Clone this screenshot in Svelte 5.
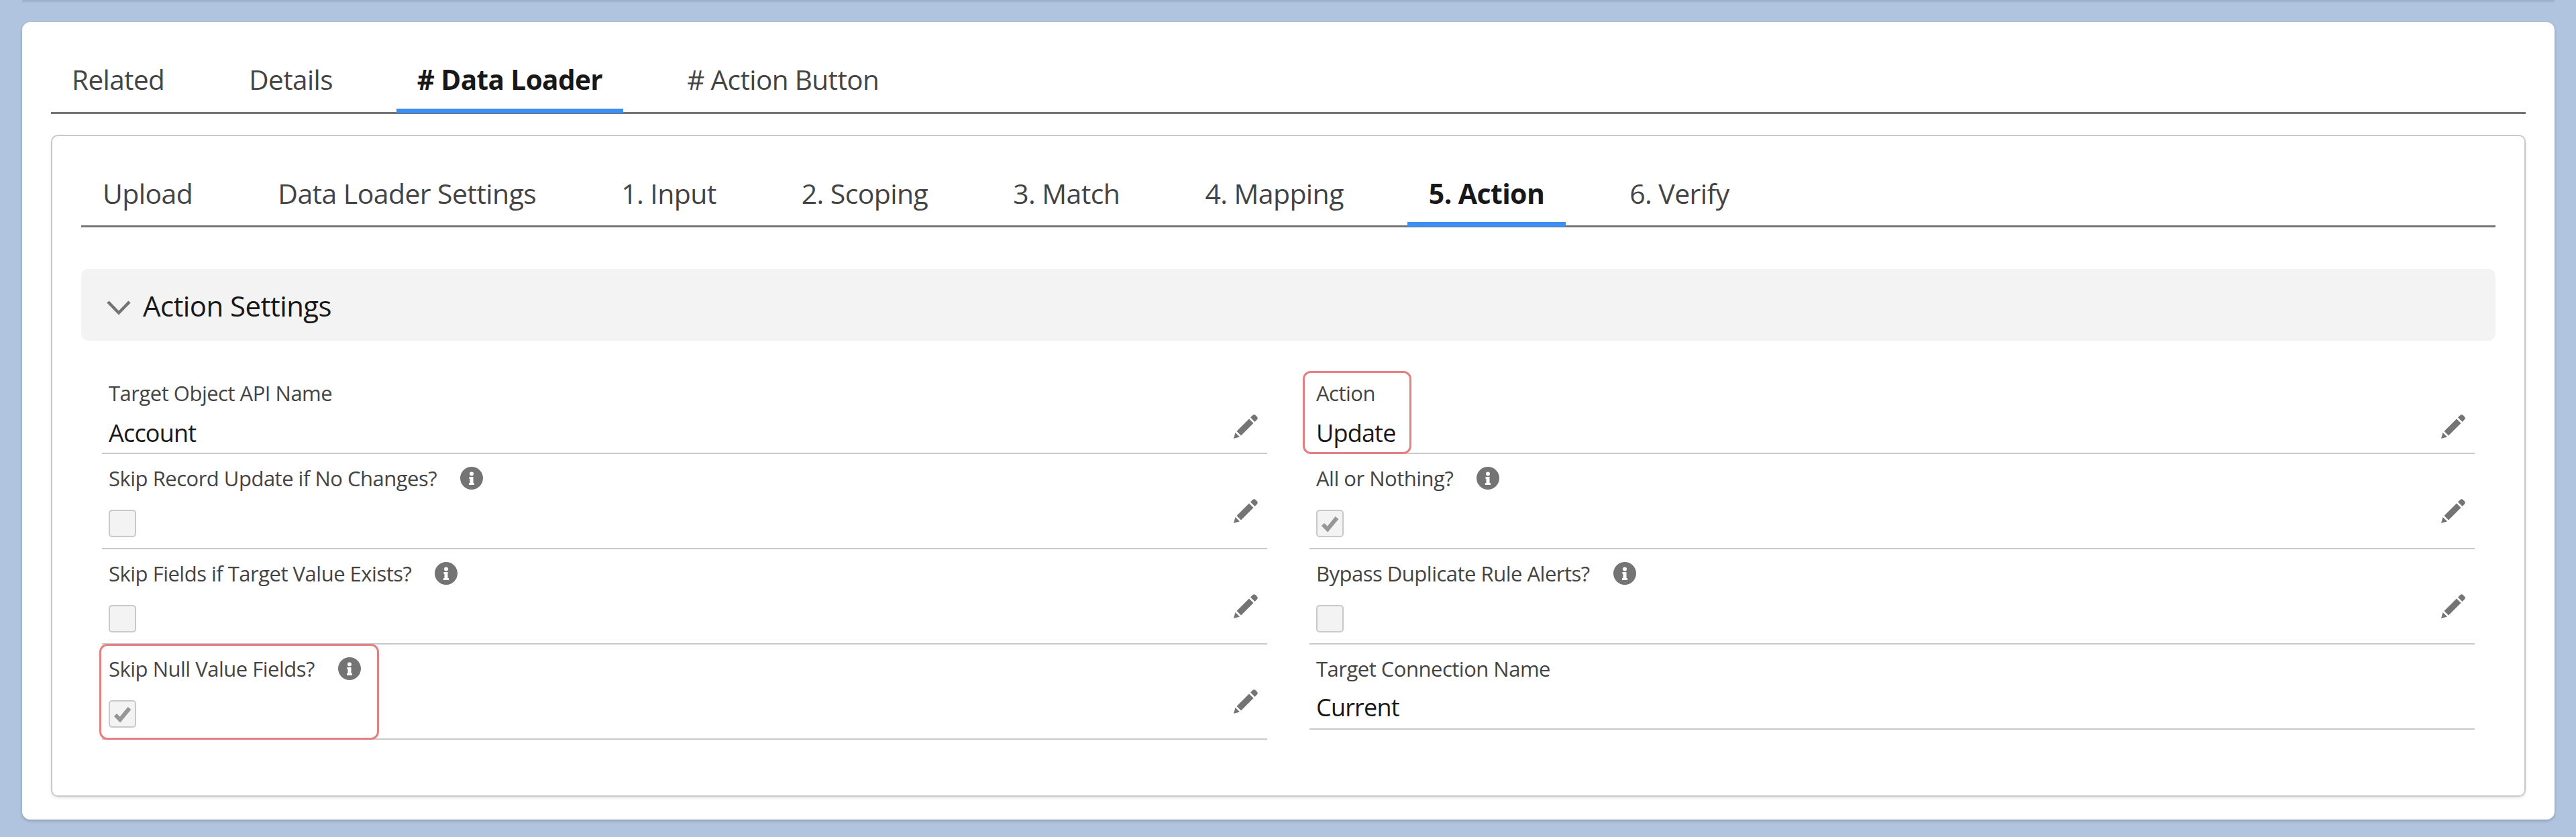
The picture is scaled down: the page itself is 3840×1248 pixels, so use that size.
<script>
  const outerTabs = ['Related', 'Details', '# Data Loader', '# Action Button'];
  const innerTabs = ['Upload', 'Data Loader Settings', '1. Input', '2. Scoping', '3. Match', '4. Mapping', '5. Action', '6. Verify'];

  const fields = [
    { label: 'Target Object API Name', value: 'Account' },
    { label: 'Action', value: 'Update', mark: 'mark-action' },
    { label: 'Skip Record Update if No Changes?', info: true, checked: false },
    { label: 'All or Nothing?', info: true, checked: true },
    { label: 'Skip Fields if Target Value Exists?', info: true, checked: false },
    { label: 'Bypass Duplicate Rule Alerts?', info: true, checked: false },
    { label: 'Skip Null Value Fields?', info: true, checked: true, mark: 'mark-null' },
    { label: 'Target Connection Name', value: 'Current', locked: true, last: true }
  ];
</script>

<div class="page">
  <div class="prev-shadow"></div>
  <div class="card">
    <ul class="tabs outer">
      {#each outerTabs as tab}
        <li class:active={tab === '# Data Loader'}>{tab}</li>
      {/each}
    </ul>

    <div class="inner">
      <ul class="tabs">
        {#each innerTabs as tab}
          <li class:active={tab === '5. Action'}>{tab}</li>
        {/each}
      </ul>

      <div class="section">
        <svg class="chevron" viewBox="0 0 36 21"><path d="M2 2 L18 18.500 L34 2" /></svg>
        <span>Action Settings</span>
      </div>

      <div class="grid">
        {#each fields as f}
          <div class="field" class:check={f.value === undefined} class:last={f.last}>
            <div class="body">
              <div class="label">
                <span>{f.label}</span>
                {#if f.info}
                  <svg class="info" viewBox="0 0 34 34">
                    <circle cx="17" cy="17" r="17" fill="#747474" />
                    <circle cx="17" cy="10.500" r="3" fill="#fff" />
                    <path d="M13.500 15 h6 v9 h1.500 v3 h-8 v-3 h1.500 v-6 h-1 z" fill="#fff" />
                  </svg>
                {/if}
              </div>
              {#if f.value !== undefined}
                <div class="value">{f.value}</div>
              {:else}
                <div class="box">
                  {#if f.checked}
                    <svg viewBox="0 0 37 37"><path d="M8 20 L15 27 L29 10" /></svg>
                  {/if}
                </div>
              {/if}
            </div>
            {#if !f.locked}
              <svg class="pencil" viewBox="0 0 37 37">
                <path d="M0 37 L2.500 28 L9 34.500 Z" />
                <path d="M4.500 26 L23 7.500 L29.500 14 L11 32.500 Z" />
                <path d="M25 5.500 L28 2.500 Q30.500 0 33 2.500 L34.500 4 Q37 6.500 34.500 9 L31.500 12 Z" />
              </svg>
            {/if}
            {#if f.mark}
              <div class="mark {f.mark}"></div>
            {/if}
          </div>
        {/each}
      </div>
    </div>
  </div>
</div>

<style>
  :global(body) {
    background: #b0c4df;
    font-family: "Open Sans", "Noto Sans", sans-serif;
  }
  .page {
    height: 1248px;
    box-sizing: border-box;
    padding: 0 32px 0 33px;
    overflow: hidden;
  }
  .prev-shadow {
    height: 5px;
    margin-bottom: 28px;
    background: linear-gradient(#9aadc8, #b0c4df);
  }
  .card {
    height: 1189px;
    box-sizing: border-box;
    padding: 0 43px;
    background: #fff;
    border-radius: 12px;
    box-shadow: 0 2px 4px rgba(0, 0, 0, 0.22);
  }
  .tabs {
    display: flex;
    gap: 63px;
    margin: 0;
    padding: 45px 0 0;
    list-style: none;
    border-bottom: 3px solid #747474;
  }
  .tabs li {
    position: relative;
    padding: 0 32px;
    height: 88px;
    line-height: 80px;
    font-size: 41px;
    letter-spacing: -0.6px;
    color: #444;
  }
  .tabs.outer {
    gap: 64px;
    padding-top: 46px;
  }
  .tabs.outer li {
    padding: 0 31px;
    font-size: 40.500px;
  }
  .tabs li.active {
    font-weight: 700;
    color: #181818;
  }
  .tabs li.active::after {
    content: "";
    position: absolute;
    left: 0;
    right: 0;
    bottom: -2px;
    height: 7px;
    background: #3b8ff2;
  }
  .inner {
    height: 987px;
    box-sizing: border-box;
    margin-top: 31px;
    padding: 0 43px;
    border: 2px solid #c9c9c9;
    border-radius: 10px;
    box-shadow: 0 2px 4px rgba(0, 0, 0, 0.1);
  }
  .section {
    display: flex;
    align-items: center;
    gap: 18px;
    height: 107px;
    margin-top: 62px;
    padding-left: 38px;
    background: #f3f3f3;
    border-radius: 10px;
    font-size: 42px;
    letter-spacing: -0.6px;
    color: #181818;
  }
  .section span {
    margin-top: 2px;
  }
  .chevron {
    width: 36px;
    height: 21px;
    margin-top: 8px;
  }
  .chevron path {
    fill: none;
    stroke: #747474;
    stroke-width: 4.500;
  }
  .grid {
    display: grid;
    grid-template-columns: 1fr 1fr;
    column-gap: 63px;
    align-items: start;
    margin-top: 45px;
    padding: 0 31px;
  }
  .field {
    position: relative;
    display: flex;
    justify-content: space-between;
    border-bottom: 2px solid #c9c9c9;
  }
  .body {
    padding: 13px 0 7px 10px;
  }
  .label {
    display: flex;
    align-items: center;
    gap: 35px;
    height: 40px;
    font-size: 31px;
    letter-spacing: -0.5px;
    color: #444;
  }
  .value {
    margin-top: 18px;
    height: 44px;
    line-height: 44px;
    font-size: 36px;
    letter-spacing: -0.8px;
    color: #181818;
  }
  .check .body {
    padding: 16px 0 16px 10px;
  }
  .last .body {
    padding: 16px 0 9px 10px;
  }
  .last .value {
    margin-top: 16px;
  }
  .info {
    width: 34px;
    height: 34px;
  }
  .box {
    box-sizing: border-box;
    width: 41px;
    height: 41px;
    margin-top: 27px;
    background: #f3f3f3;
    border: 2px solid #c9c9c9;
    border-radius: 5px;
  }
  .box svg {
    display: block;
    width: 37px;
    height: 37px;
  }
  .box path {
    fill: none;
    stroke: #969696;
    stroke-width: 6;
  }
  .pencil {
    align-self: flex-end;
    width: 37px;
    height: 37px;
    margin: 0 13px 21px 0;
    fill: #747474;
  }
  .check .pencil {
    margin-bottom: 37px;
  }
  .mark {
    position: absolute;
    box-sizing: border-box;
    top: 0;
    border: 3px solid #e57f80;
    border-radius: 12px;
  }
  .mark-action {
    left: -10px;
    width: 162px;
    height: 124px;
  }
  .mark-null {
    top: -1px;
    left: -4px;
    width: 417px;
    height: 143px;
  }
</style>
